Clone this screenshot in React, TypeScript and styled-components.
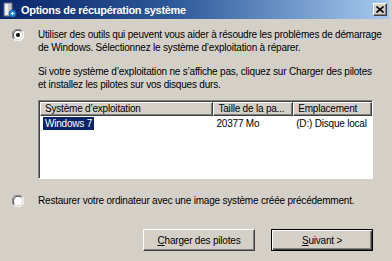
import { FC } from 'react';
import styled, { createGlobalStyle } from 'styled-components';

const GlobalStyle = createGlobalStyle`
  html, body {
    margin: 0;
    padding: 0;
    background: #d4d0c8;
  }
  body {
    font-family: Tahoma, "Liberation Sans", Arial, sans-serif;
    font-size: 10px;
    letter-spacing: -0.2px;
    color: #000;
  }
`;

const Window = styled.div`
  width: 392px;
  height: 261px;
  box-sizing: border-box;
  display: flex;
  flex-direction: column;
  background: #d4d0c8;
  padding-right: 3px;
  overflow: hidden;
`;

const TitleBar = styled.div`
  height: 19px;
  flex: none;
  display: flex;
  align-items: center;
  padding: 0 2px 0 3px;
  background: linear-gradient(to right, #0a246a 0%, #2d5a9a 45%, #a6caf0 100%);
`;

const Title = styled.div`
  flex: 1;
  margin-left: 4px;
  color: #fff;
  font-weight: bold;
  font-size: 11px;
  letter-spacing: -0.3px;
`;

const CloseBtn = styled.div`
  width: 14px;
  height: 13px;
  box-sizing: border-box;
  display: flex;
  align-items: center;
  justify-content: center;
  background: #d4d0c8;
  border: 1px solid;
  border-color: #fff #404040 #404040 #fff;
  box-shadow: inset -1px -1px 0 #808080;
`;

const Body = styled.div`
  flex: 1;
  display: flex;
  flex-direction: column;
  padding: 9px 16px 0 12px;
`;

const OptionRow = styled.div<{ $gap?: number }>`
  display: flex;
  align-items: flex-start;
  margin-top: ${(p) => p.$gap ?? 0}px;
`;

const RadioBox = styled.div`
  width: 26px;
  flex: none;
  padding-top: 1px;
`;

const Paragraphs = styled.div`
  display: flex;
  flex-direction: column;
  gap: 11px;
`;

const Text = styled.p`
  margin: 0;
  line-height: 13px;
  white-space: nowrap;
`;

const ListView = styled.div`
  margin: 9px 0 0 26px;
  width: 335px;
  height: 79px;
  box-sizing: border-box;
  background: #fff;
  border: 1px solid;
  border-color: #808080 #fff #fff #808080;
  box-shadow: inset 1px 1px 0 #404040;
  display: flex;
  flex-direction: column;
  padding: 1px 0 0 1px;
`;

const HeaderRow = styled.div`
  display: flex;
  height: 14px;
`;

const HeaderCell = styled.div<{ $w: number }>`
  width: ${(p) => p.$w}px;
  box-sizing: border-box;
  background: #d4d0c8;
  border: 1px solid;
  border-color: #fff #404040 #404040 #fff;
  box-shadow: inset -1px -1px 0 #808080;
  padding: 0 4px;
  line-height: 11px;
  white-space: nowrap;
  overflow: hidden;
`;

const DataRow = styled.div`
  display: flex;
  height: 14px;
  align-items: center;
`;

const Cell = styled.div<{ $w: number }>`
  width: ${(p) => p.$w}px;
  padding-left: 3px;
  box-sizing: border-box;
  white-space: nowrap;
`;

const Selected = styled.span`
  background: #0a246a;
  color: #fff;
  padding: 1px 2px;
`;

const Footer = styled.div`
  margin-top: auto;
  margin-bottom: 10px;
  display: flex;
  justify-content: flex-end;
  gap: 16px;
`;

const Button = styled.button<{ $default?: boolean; $w: number }>`
  width: ${(p) => p.$w}px;
  height: 22px;
  font: inherit;
  letter-spacing: inherit;
  color: #000;
  background: #d4d0c8;
  border: 1px solid;
  border-color: ${(p) => (p.$default ? '#000' : '#fff #404040 #404040 #fff')};
  box-shadow: ${(p) =>
    p.$default
      ? 'inset 1px 1px 0 #fff, inset -1px -1px 0 #404040, inset -2px -2px 0 #808080'
      : 'inset -1px -1px 0 #808080'};
  padding: 0;
`;

const Radio: FC<{ checked?: boolean }> = ({ checked }) => (
  <svg width="12" height="12" viewBox="0 0 12 12">
    <circle cx="6" cy="6" r="5.5" fill="#fff" />
    <path d="M1.8 10.2 A5.5 5.5 0 0 1 10.2 1.8" stroke="#808080" strokeWidth="1" fill="none" />
    <path d="M2.6 9.4 A4.5 4.5 0 0 1 9.4 2.6" stroke="#404040" strokeWidth="1" fill="none" />
    <path d="M10.2 1.8 A5.5 5.5 0 0 1 1.8 10.2" stroke="#fff" strokeWidth="1" fill="none" />
    <path d="M9.4 2.6 A4.5 4.5 0 0 1 2.6 9.4" stroke="#d4d0c8" strokeWidth="1" fill="none" />
    {checked && <circle cx="6" cy="6" r="2" fill="#000" />}
  </svg>
);

const WinIcon: FC = () => (
  <svg width="14" height="16" viewBox="0 0 14 16">
    <rect x="1" y="1" width="8" height="13" fill="#c8ccd2" stroke="#6a7280" strokeWidth="1" />
    <rect x="2" y="2" width="3" height="11" fill="#eef0f3" />
    <circle cx="9.5" cy="11.5" r="3.5" fill="#1f8fd8" stroke="#0c5a9c" strokeWidth="0.8" />
    <path d="M8 11.5 L11 11.5 M9.5 10 L9.5 13" stroke="#fff" strokeWidth="1" />
  </svg>
);

const App: FC = () => (
  <>
    <GlobalStyle />
    <Window>
      <TitleBar>
        <WinIcon />
        <Title>Options de récupération système</Title>
        <CloseBtn>
          <svg width="8" height="7" viewBox="0 0 8 7">
            <path d="M0.5 0.5 L7.5 6.5 M7.5 0.5 L0.5 6.5" stroke="#000" strokeWidth="1.6" />
          </svg>
        </CloseBtn>
      </TitleBar>
      <Body>
        <OptionRow>
          <RadioBox>
            <Radio checked />
          </RadioBox>
          <Paragraphs>
            <Text>
              Utiliser des outils qui peuvent vous aider à résoudre les problèmes de démarrage
              <br />
              de Windows. Sélectionnez le système d’exploitation à réparer.
            </Text>
            <Text>
              Si votre système d’exploitation ne s’affiche pas, cliquez sur Charger des pilotes
              <br />
              et installez les pilotes sur vos disques durs.
            </Text>
          </Paragraphs>
        </OptionRow>
        <ListView>
          <HeaderRow>
            <HeaderCell $w={174}>Système d’exploitation</HeaderCell>
            <HeaderCell $w={80}>Taille de la pa...</HeaderCell>
            <HeaderCell $w={79}>Emplacement</HeaderCell>
          </HeaderRow>
          <DataRow>
            <Cell $w={174}>
              <Selected>Windows 7</Selected>
            </Cell>
            <Cell $w={80}>20377 Mo</Cell>
            <Cell $w={79}>(D:) Disque local</Cell>
          </DataRow>
        </ListView>
        <OptionRow $gap={15}>
          <RadioBox>
            <Radio />
          </RadioBox>
          <Text>Restaurer votre ordinateur avec une image système créée précédemment.</Text>
        </OptionRow>
        <Footer>
          <Button $w={112}>
            <u>C</u>harger des pilotes
          </Button>
          <Button $w={102} $default>
            <u>S</u>uivant &gt;
          </Button>
        </Footer>
      </Body>
    </Window>
  </>
);

export default App;
